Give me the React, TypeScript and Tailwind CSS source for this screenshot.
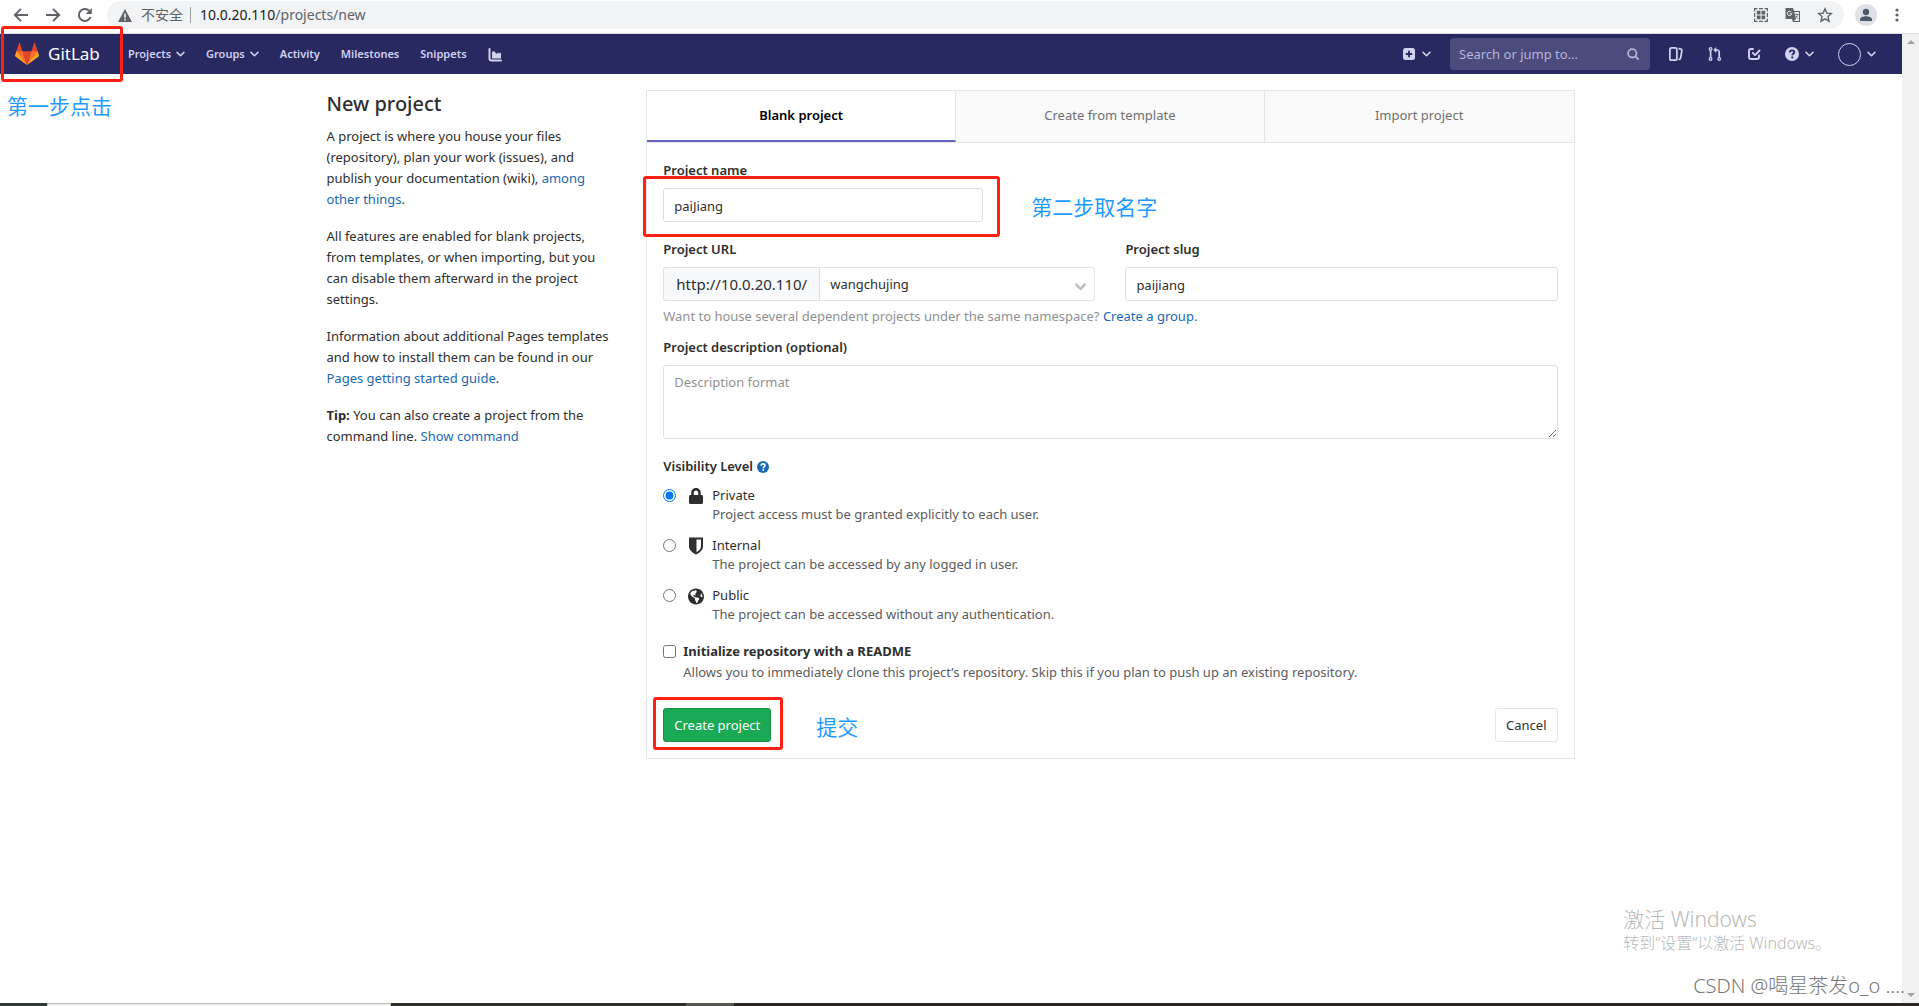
import type { ReactNode } from 'react'
import { FaLock, FaGlobeAmericas } from 'react-icons/fa'

const navLinks = [
    { label: 'Projects', menu: true },
    { label: 'Groups', menu: true },
    { label: 'Activity', menu: false },
    { label: 'Milestones', menu: false },
    { label: 'Snippets', menu: false },
]

const levels = [
    { id: 'private', title: 'Private', text: 'Project access must be granted explicitly to each user.' },
    { id: 'internal', title: 'Internal', text: 'The project can be accessed by any logged in user.' },
    { id: 'public', title: 'Public', text: 'The project can be accessed without any authentication.' },
]

const field = 'h-[34px] rounded-[3px] border border-[#dfdfdf] bg-white px-[10px] pt-[2px] text-[13px] text-[#2e2e2e] outline-none'

function Chevron({ className = 'w-[9px]', weight = 1.7 }: { className?: string; weight?: number }) {
    return (
        <svg viewBox="0 0 10 7" className={className} fill="none" stroke="currentColor" strokeWidth={weight} strokeLinecap="round" strokeLinejoin="round">
            <path d="M1.200 1.500L5 5.300l3.800-3.800" />
        </svg>
    )
}

function GitLabLogo() {
    return (
        <svg viewBox="0 0 36 36" className="h-6 w-6">
            <path fill="#e24329" d="M2 14l9.38 9v-9l-4-12.28c-.205-.632-1.176-.632-1.38 0z" />
            <path fill="#e24329" d="M34 14l-9.38 9v-9l4-12.28c.205-.632 1.176-.632 1.38 0z" />
            <path fill="#e24329" d="M18 34.38L11.38 14h13.24z" />
            <path fill="#fc6d26" d="M18 34.38L11.38 14H2l6 12.5z" />
            <path fill="#fc6d26" d="M18 34.38L24.62 14H34l-6 12.5z" />
            <path fill="#fca326" d="M2 14L.1 20.16c-.18.565 0 1.2.5 1.56L18 34.38z" />
            <path fill="#fca326" d="M34 14l1.9 6.16c.18.565 0 1.2-.5 1.56L18 34.38z" />
        </svg>
    )
}

function HelpIcon({ className, mark }: { className: string; mark: string }) {
    return (
        <svg viewBox="0 0 16 16" className={className}>
            <circle cx="8" cy="8" r="8" fill="currentColor" />
            <path d="M5.400 6.200C5.500 4.600 6.600 3.800 8 3.800c1.500 0 2.600.9 2.600 2.200 0 1.700-2.300 1.800-2.300 3.500" fill="none" stroke={mark} strokeWidth="2.100" />
            <rect x="7.200" y="10.800" width="2.200" height="2.200" fill={mark} />
        </svg>
    )
}

function LevelIcon({ id }: { id: string }) {
    if (id === 'private') return <FaLock className="h-4 w-4" />
    if (id === 'public') return <FaGlobeAmericas className="h-[17px] w-[17px]" />
    return (
        <svg viewBox="0 0 16 18" className="h-[18px] w-4">
            <path d="M1 .5h14v8.500c0 4-3 6.800-7 8.500-4-1.700-7-4.500-7-8.500z" fill="currentColor" />
            <path d="M8.500 2.500H13V9c0 2.800-1.800 4.700-4.500 6.100z" fill="#fff" />
        </svg>
    )
}

function BrowserBar() {
    return (
        <div className="flex h-[34px] items-start border-b border-[#dadce0] bg-white pt-px text-[#5f6368]">
            <div className="flex h-7 items-center gap-4 pl-[13px] pr-[14px]">
                <button aria-label="Back">
                    <svg viewBox="0 0 16 16" className="h-4 w-4" fill="none" stroke="currentColor" strokeWidth="1.900">
                        <path d="M15 8H2M8 1.800L1.800 8 8 14.200" />
                    </svg>
                </button>
                <button aria-label="Forward">
                    <svg viewBox="0 0 16 16" className="h-4 w-4" fill="none" stroke="currentColor" strokeWidth="1.900">
                        <path d="M1 8h13M8 1.800L14.200 8 8 14.200" />
                    </svg>
                </button>
                <button aria-label="Reload">
                    <svg viewBox="0 0 16 16" className="h-4 w-4" fill="none" stroke="currentColor" strokeWidth="2">
                        <path d="M13.500 10A6 6 0 1 1 12.200 3.800" />
                        <path d="M14.800 1v6H8.800z" fill="currentColor" stroke="none" />
                    </svg>
                </button>
            </div>
            <div className="flex h-7 flex-1 items-center rounded-full bg-[#f1f3f4] pl-[11px] pr-[11px]">
                <svg viewBox="0 0 14 13" className="h-[13px] w-[14px]">
                    <path d="M7 0l7 13H0z" fill="currentColor" />
                    <path d="M6.200 4.500h1.600v4.200H6.200zM6.200 9.800h1.600v1.600H6.200z" fill="#f1f3f4" />
                </svg>
                <span className="ml-[9px] border-r border-[#9aa0a6] pr-[7px] text-sm leading-4">不安全</span>
                <span className="ml-[9px] text-sm"><span className="text-[#202124]">10.0.20.110</span>/projects/new</span>
                <div className="ml-auto flex items-center gap-4">
                    <svg viewBox="0 0 16 16" className="h-4 w-4" fill="none" stroke="currentColor" strokeWidth="1.200">
                        <path d="M1.600 4.500V1.600h2.900M11.500 1.600h2.900v2.900M14.400 11.500v2.900h-2.900M4.500 14.400H1.600v-2.900M6 1.600h4M6 14.400h4M1.600 6v4M14.400 6v4" />
                        <path d="M3.800 3.800h3.700v3.700H3.800zM8.500 3.800h3.700v3.700H8.500zM3.800 8.500h3.700v3.700H3.800zM8.500 8.500h3.700v3.700H8.500z" fill="currentColor" stroke="none" />
                    </svg>
                    <svg viewBox="0 0 16 16" className="h-4 w-4">
                        <path d="M1 1h7l1 3h5.500a.5.5 0 0 1 .5.5v10a.5.5 0 0 1-.5.5H8l-1-3H1a.5.5 0 0 1-.5-.5V1.500A.5.5 0 0 1 1 1z" fill="currentColor" />
                        <path d="M9.300 5H14v9H9l2-2z" fill="#f1f3f4" />
                        <path d="M6.500 5.200a2.200 2.200 0 1 0 .3 1.500H4.800" fill="none" stroke="#f1f3f4" />
                        <path d="M10 7.500h3.500M11.700 6.500v1M13 7.500c-.4 1.600-1.400 2.600-2.400 3.300M10.800 9c.6 1.200 1.400 1.900 2.400 2.500" fill="none" stroke="currentColor" strokeWidth=".8" />
                    </svg>
                    <svg viewBox="0 0 16 16" className="h-4 w-4" fill="none" stroke="currentColor" strokeWidth="1.400">
                        <path d="M8 1.800l1.800 4.300 4.700.4-3.500 3.100 1 4.600L8 11.800l-4 2.400 1-4.600L1.500 6.500l4.700-.4z" />
                    </svg>
                </div>
            </div>
            <div className="flex h-7 items-center pl-[11px] pr-5">
                <svg viewBox="0 0 22 22" className="h-[22px] w-[22px]">
                    <circle cx="11" cy="11" r="11" fill="#dee1e6" />
                    <circle cx="11" cy="8" r="3.200" fill="#4d5a6c" />
                    <path d="M5 17v-1.500C5 13.300 8.500 12.200 11 12.200s6 1.100 6 3.300V17z" fill="#4d5a6c" />
                </svg>
                <svg viewBox="0 0 4 14" className="ml-[18px] h-[14px] w-1" fill="currentColor">
                    <circle cx="2" cy="2" r="1.600" />
                    <circle cx="2" cy="7" r="1.600" />
                    <circle cx="2" cy="12" r="1.600" />
                </svg>
            </div>
        </div>
    )
}

function NavBar() {
    return (
        <header className="flex h-10 items-center bg-[#292961] pl-[15px] pr-[26px] text-[#d1d1f0]">
            <a href="#" className="relative flex items-center gap-[9px] text-[17px] text-white">
                <GitLabLogo />
                <span className="w-[52px]">GitLab</span>
                <Mark className="-left-[14px] -top-[15px] h-14 w-[122px]" />
                <Note className="-left-2 top-[51px]">第一步点击</Note>
            </a>
            <nav className="ml-7 flex items-center gap-[21px] pt-px text-[11px] font-semibold">
                {navLinks.map((link) => (
                    <a key={link.label} href="#" className="flex items-center gap-[5px]">
                        {link.label}
                        {link.menu && <Chevron />}
                    </a>
                ))}
                <a href="#" aria-label="Analytics">
                    <svg viewBox="0 0 14 14" className="h-[14px] w-[14px]" fill="currentColor">
                        <path d="M1.500 1v9.500a2 2 0 0 0 2 2H13" fill="none" stroke="currentColor" strokeWidth="2" strokeLinecap="round" />
                        <path d="M4 10.500V4l2-1 2.500 3 1.500-1.500 1.500 1L13 4.500v6z" />
                    </svg>
                </a>
            </nav>
            <div className="ml-auto flex items-center">
                <button aria-label="New" className="flex items-center gap-[7px]">
                    <svg viewBox="0 0 12 12" className="h-3 w-3">
                        <rect width="12" height="12" rx="2.500" fill="currentColor" />
                        <path d="M6 2.800v6.400M2.800 6h6.400" stroke="#292961" strokeWidth="1.800" />
                    </svg>
                    <Chevron />
                </button>
                <div className="ml-[19px] flex h-8 w-[200px] items-center rounded-[4px] bg-[#4b4b7d] px-[9px]">
                    <input aria-label="Search or jump to" placeholder="Search or jump to..." className="min-w-0 flex-1 bg-transparent pt-[2px] text-[13px] outline-none placeholder:text-[#b5b5d8]" />
                    <svg viewBox="0 0 12 12" className="mr-[2px] h-3 w-3 text-[#b5b5d8]" fill="none" stroke="currentColor" strokeWidth="1.800" strokeLinecap="round">
                        <circle cx="5.300" cy="5.300" r="4.200" />
                        <path d="M8.600 8.600l2.400 2.400" />
                    </svg>
                </div>
                <a href="#" aria-label="Issues" className="ml-[19px]">
                    <svg viewBox="0 0 16 16" className="h-[14px] w-[14px]" fill="currentColor" fillRule="evenodd">
                        <path d="M10.458 15.012l.311.055a3 3 0 0 0 3.476-2.433l1.389-7.879A3 3 0 0 0 13.200 1.280L11.230.933a3.002 3.002 0 0 0-.824-.031c.364.59.58 1.280.593 2.020l1.854.328a1 1 0 0 1 .811 1.158l-1.389 7.879a1 1 0 0 1-1.158.81l-.118-.02a3.980 3.980 0 0 1-.541 1.935zM3 0h4a3 3 0 0 1 3 3v10a3 3 0 0 1-3 3H3a3 3 0 0 1-3-3V3a3 3 0 0 1 3-3zm0 2a1 1 0 0 0-1 1v10a1 1 0 0 0 1 1h4a1 1 0 0 0 1-1V3a1 1 0 0 0-1-1H3z" />
                    </svg>
                </a>
                <a href="#" aria-label="Merge requests" className="ml-[25px]">
                    <svg viewBox="0 0 14 14" className="h-[14px] w-[14px]" fill="none" stroke="currentColor" strokeWidth="1.300">
                        <circle cx="2.600" cy="12" r="1.300" />
                        <circle cx="11.200" cy="12" r="1.300" />
                        <circle cx="2.600" cy="2" r="1.300" />
                        <path d="M2.600 3.300v7.400M11.200 10.700V5c0-1.300-.8-2-2-2H7" strokeWidth="1.700" />
                        <path d="M8.300 0v6L5.300 3z" fill="currentColor" stroke="none" />
                    </svg>
                </a>
                <a href="#" aria-label="To-Do List" className="ml-[25px]">
                    <svg viewBox="0 0 14 14" className="h-[14px] w-[14px]" fill="none" stroke="currentColor" strokeWidth="1.900" strokeLinecap="round" strokeLinejoin="round">
                        <path d="M6 2H4a2 2 0 0 0-2 2v6a2 2 0 0 0 2 2h6a2 2 0 0 0 2-2V8.500" />
                        <path d="M5.800 5.800l2.300 2.300L12.500 3.500" />
                    </svg>
                </a>
                <button aria-label="Help" className="ml-6 flex items-center gap-[6px]">
                    <HelpIcon className="h-[14px] w-[14px]" mark="#292961" />
                    <Chevron />
                </button>
                <button aria-label="Account" className="ml-6 flex items-center gap-[6px]">
                    <span className="h-[23px] w-[23px] rounded-full border border-[#d1d1f0]" />
                    <Chevron />
                </button>
            </div>
        </header>
    )
}

// red frame drawn over a control
function Mark({ className }: { className: string }) {
    return <span className={`pointer-events-none absolute rounded-[3px] border-[3px] border-[#ff2015] ${className}`} />
}

function Note({ className, children }: { className: string; children: ReactNode }) {
    return <span className={`pointer-events-none absolute whitespace-nowrap text-[21px] leading-7 text-[#1e9bff] ${className}`}>{children}</span>
}

function Intro() {
    return (
        <aside className="w-1/4 px-[15px] leading-[21px]">
            <h4 className="mb-2 text-xl font-medium leading-7">New project</h4>
            <p className="mb-4">
                A project is where you house your files (repository), plan your work (issues), and publish your documentation (wiki),{' '}
                <a href="#" className="text-[#1b69b6]">among other things</a>.
            </p>
            <p className="mb-4">
                All features are enabled for blank projects, from templates, or when importing, but you can disable them afterward in the project settings.
            </p>
            <p className="mb-4">
                Information about additional Pages templates and how to install them can be found in our{' '}
                <a href="#" className="text-[#1b69b6]">Pages getting started guide</a>.
            </p>
            <p>
                <strong>Tip:</strong> You can also create a project from the command line.{' '}
                <a href="#" className="text-[#1b69b6]">Show command</a>
            </p>
        </aside>
    )
}

function ProjectForm() {
    return (
        <form className="px-4 pb-4 pt-[17px] leading-[21px]" onSubmit={(e) => e.preventDefault()}>
            <label htmlFor="name" className="block font-semibold">Project name</label>
            <div className="relative mt-[7px] w-80">
                <input id="name" defaultValue="paiJiang" className={`${field} w-full`} />
                <Mark className="-left-5 -top-3 h-[61px] w-[357px]" />
                <Note className="left-[368px] top-[5px]">第二步取名字</Note>
            </div>
            <div className="mt-[17px] flex gap-[30px]">
                <div className="flex-1">
                    <label htmlFor="namespace" className="block font-semibold">Project URL</label>
                    <div className="mt-[7px] flex">
                        <span className="flex h-[34px] w-[157px] items-center justify-center rounded-l-[3px] border border-[#dfdfdf] bg-[#f8f9fa] text-[15px]">http://10.0.20.110/</span>
                        <div className="relative flex-1">
                            <select id="namespace" className="h-[34px] w-full appearance-none rounded-r-[3px] border border-l-0 border-[#e5e5e5] bg-white px-[10px] text-[13px] outline-none">
                                <option>wangchujing</option>
                            </select>
                            <Chevron weight={2.4} className="pointer-events-none absolute right-[9px] top-[16px] w-[11px] text-[#bfbfbf]" />
                        </div>
                    </div>
                </div>
                <div className="flex-1">
                    <label htmlFor="slug" className="block font-semibold">Project slug</label>
                    <input id="slug" defaultValue="paijiang" className={`${field} mt-[7px] w-full`} />
                </div>
            </div>
            <p className="mt-[5px] text-[#919191]">
                Want to house several dependent projects under the same namespace? <a href="#" className="text-[#1b69b6]">Create a group.</a>
            </p>
            <label htmlFor="description" className="mt-[10px] block font-semibold">Project description (optional)</label>
            <textarea id="description" placeholder="Description format" className="mt-[7px] block h-[74px] w-full rounded-[3px] border border-[#dfdfdf] px-[10px] py-[6px] outline-none placeholder:text-[#919191]" />

            <fieldset className="mt-[17px]">
                <legend className="flex items-center gap-1 font-semibold">
                    Visibility Level
                    <a href="#" aria-label="Visibility help" className="text-[#1b69b6]"><HelpIcon className="h-3 w-3" mark="#fff" /></a>
                </legend>
                <div className="mt-2 flex flex-col gap-[10px]">
                    {levels.map((level) => (
                        <label key={level.id} className="flex h-10">
                            <input type="radio" name="visibility" defaultChecked={level.id === 'private'} className="mt-1 h-[13px] w-[13px]" />
                            <span className="ml-3 flex h-[22px] w-4 items-center justify-center"><LevelIcon id={level.id} /></span>
                            <span className="ml-2 flex flex-col">
                                <span className="leading-5">{level.title}</span>
                                <span className="leading-[19px] text-[#5c5c5c]">{level.text}</span>
                            </span>
                        </label>
                    ))}
                </div>
            </fieldset>

            <div className="mt-4 flex">
                <input id="readme" type="checkbox" aria-describedby="readme-help" className="mt-1 h-[13px] w-[13px]" />
                <div className="ml-[7px]">
                    <label htmlFor="readme" className="block font-bold">Initialize repository with a README</label>
                    <p id="readme-help" className="text-[#5c5c5c]">
                        Allows you to immediately clone this project’s repository. Skip this if you plan to push up an existing repository.
                    </p>
                </div>
            </div>

            <div className="mt-[25px] flex justify-between">
                <div className="relative">
                    <button type="submit" className="h-[34px] rounded-[3px] border border-[#168f48] bg-[#1aaa55] px-[10px] text-white">Create project</button>
                    <Mark className="-left-[10px] -top-[11px] h-[53px] w-[130px]" />
                    <Note className="left-[153px] top-[5px]">提交</Note>
                </div>
                <button type="button" className="h-[34px] rounded-[3px] border border-[#e5e5e5] bg-white px-[10px]">Cancel</button>
            </div>
        </form>
    )
}

export default function App() {
    return (
        <div className="flex min-h-screen flex-col bg-white font-['Noto_Sans','Noto_Sans_CJK_SC',sans-serif] text-[13px] text-[#2e2e2e]">
            <BrowserBar />
            <div className="relative flex flex-1">
                <div className="min-w-0 flex-1">
                    <NavBar />
                    <main className="mx-auto flex max-w-[1279px] pt-4">
                        <Intro />
                        <div className="w-3/4 pl-[15px] pr-4">
                            <section className="border border-[#e5e5e5]">
                                <div role="tablist" className="grid grid-cols-3 divide-x divide-[#e5e5e5] border-b border-[#e5e5e5]">
                                    <button role="tab" aria-selected="true" className="h-[51px] border-b-2 border-b-[#6666c4] font-semibold text-black">Blank project</button>
                                    <button role="tab" aria-selected="false" className="h-[51px] bg-[#fafafa] pb-[2px] text-[#707070]">Create from template</button>
                                    <button role="tab" aria-selected="false" className="h-[51px] bg-[#fafafa] pb-[2px] text-[#707070]">Import project</button>
                                </div>
                                <ProjectForm />
                            </section>
                        </div>
                    </main>
                </div>
                <div className="flex w-[17px] flex-col items-center justify-between bg-[#f1f1f1] py-[6px] text-[#a3a3a3]">
                    <svg viewBox="0 0 8 4" className="h-1 w-2" fill="currentColor"><path d="M4 0l4 4H0z" /></svg>
                    <svg viewBox="0 0 8 4" className="h-1 w-2" fill="currentColor"><path d="M4 4L0 0h8z" /></svg>
                </div>
                <div className="pointer-events-none absolute bottom-12 right-[88px] text-[#b9b9b9]">
                    <p className="text-[21px] font-light leading-6">激活 Windows</p>
                    <p className="text-base font-light leading-6">转到“设置”以激活 Windows。</p>
                </div>
                <p className="pointer-events-none absolute bottom-[5px] right-[14px] text-xl font-light leading-6 text-[#777777]">CSDN @喝星茶发o_o ....</p>
            </div>
            <div className="flex h-[3px] bg-[#2b2622]">
                <div className="w-[47px] bg-[#2c3833]" />
                <div className="w-[344px] border border-b-0 border-[#b9bdb9] bg-[#f1f3f1]" />
                <div className="w-[295px] bg-[#2d2f28]" />
                <div className="w-12 bg-[#555552]" />
            </div>
        </div>
    )
}
